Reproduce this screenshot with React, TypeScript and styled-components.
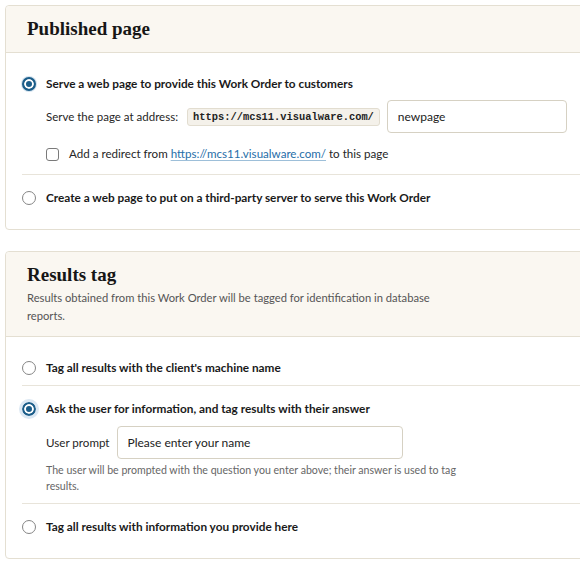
import styled, { createGlobalStyle } from 'styled-components'

const GlobalStyle = createGlobalStyle`
  html, body {
    margin: 0;
    padding: 0;
    background: #ffffff;
    overflow: hidden;
  }
  body {
    font-family: Lato, "Noto Sans", sans-serif;
    color: #222;
  }
`

const Page = styled.div`
  padding: 5px 0 0 5px;
  width: 640px;
`

const Card = styled.section`
  border: 1px solid #e4dfd2;
  border-radius: 4px;
  background: #fff;
  margin-bottom: 21px;
`

const CardHeader = styled.header`
  background: #faf7f1;
  border-bottom: 1px solid #e4dfd2;
  border-radius: 4px 4px 0 0;
  padding: 11px 21px 11px;
`

const Title = styled.h2`
  margin: 0;
  font-family: "Liberation Serif", serif;
  font-weight: 700;
  font-size: 19px;
  line-height: 24px;
  color: #161616;
`

const Description = styled.p`
  margin: 2px 0 0;
  max-width: 430px;
  font-size: 11.2px;
  line-height: 18px;
  color: #555;
`

const CardBody = styled.div`
  padding: 8px 0 14px 16px;
`

const Option = styled.div`
  padding: 13px 0 7px;
  & + & {
    border-top: 1px solid #e8e4da;
  }
`

const OptionLabel = styled.label`
  display: flex;
  align-items: center;
  gap: 10px;
  font-size: 11.8px;
  font-weight: 700;
  line-height: 20px;
  color: #1a1a1a;
`

const Radio = styled.span<{ $checked?: boolean; $focused?: boolean }>`
  flex: none;
  width: 14px;
  height: 14px;
  box-sizing: border-box;
  border-radius: 50%;
  border: ${p => (p.$checked ? '2px solid #1b5d89' : '1px solid #858585')};
  background: ${p => (p.$checked ? '#1b5d89' : '#fff')};
  box-shadow: ${p =>
    p.$checked
      ? 'inset 0 0 0 2px #fff, 0 0 0 1px #d3e2ee'
      : 'none'};
  outline: ${p => (p.$focused ? '3px solid #dce8f3' : 'none')};
  outline-offset: 0;
`

const SubContent = styled.div`
  padding-left: 24px;
`

const AddressRow = styled.div`
  display: flex;
  align-items: center;
  margin-top: 6px;
  font-size: 11.5px;
  color: #262626;
`

const AddressLabel = styled.span`
  margin-right: 9px;
`

const Code = styled.code`
  font-family: "Liberation Mono", monospace;
  font-weight: 700;
  font-size: 10.4px;
  color: #222;
  background: #f4f1ea;
  border: 1px solid #e2ddd0;
  border-radius: 3px;
  padding: 2px 5px;
  margin-right: 7px;
`

const TextInput = styled.input<{ $width: number }>`
  box-sizing: border-box;
  width: ${p => p.$width}px;
  height: 33px;
  border: 1px solid #d6d1c3;
  border-radius: 4px;
  padding: 0 10px;
  font-family: Lato, "Noto Sans", sans-serif;
  font-size: 12px;
  color: #222;
  background: #fff;
  outline: none;
`

const CheckRow = styled.label`
  display: flex;
  align-items: center;
  gap: 10px;
  margin-top: 12px;
  margin-bottom: 4px;
  font-size: 11.6px;
  line-height: 18px;
  color: #262626;
`

const Checkbox = styled.span`
  flex: none;
  width: 13px;
  height: 13px;
  box-sizing: border-box;
  border: 1px solid #7a7a7a;
  border-radius: 3px;
  background: #fff;
`

const Link = styled.a`
  color: #1f6ea8;
  text-decoration: underline;
  text-decoration-color: #9dbfd9;
  text-underline-offset: 2px;
`

const PromptRow = styled.div`
  display: flex;
  align-items: center;
  gap: 7px;
  margin-top: 7px;
  font-size: 11.6px;
  color: #262626;
`

const Help = styled.p`
  margin: 3px 0 2px;
  max-width: 425px;
  font-size: 10.6px;
  line-height: 16px;
  color: #666;
`

export default function App() {
  return (
    <>
      <GlobalStyle />
      <Page>
        <Card>
          <CardHeader>
            <Title>Published page</Title>
          </CardHeader>
          <CardBody>
            <Option>
              <OptionLabel>
                <Radio $checked />
                Serve a web page to provide this Work Order to customers
              </OptionLabel>
              <SubContent>
                <AddressRow>
                  <AddressLabel>Serve the page at address:</AddressLabel>
                  <Code>https://mcs11.visualware.com/</Code>
                  <TextInput $width={180} defaultValue="newpage" />
                </AddressRow>
                <CheckRow>
                  <Checkbox />
                  <span>
                    Add a redirect from <Link href="#">https://mcs11.visualware.com/</Link> to this page
                  </span>
                </CheckRow>
              </SubContent>
            </Option>
            <Option>
              <OptionLabel>
                <Radio />
                Create a web page to put on a third-party server to serve this Work Order
              </OptionLabel>
            </Option>
          </CardBody>
        </Card>

        <Card>
          <CardHeader>
            <Title>Results tag</Title>
            <Description>
              Results obtained from this Work Order will be tagged for identification in database
              reports.
            </Description>
          </CardHeader>
          <CardBody>
            <Option>
              <OptionLabel>
                <Radio />
                Tag all results with the client's machine name
              </OptionLabel>
            </Option>
            <Option>
              <OptionLabel>
                <Radio $checked $focused />
                Ask the user for information, and tag results with their answer
              </OptionLabel>
              <SubContent>
                <PromptRow>
                  User prompt
                  <TextInput $width={286} defaultValue="Please enter your name" />
                </PromptRow>
                <Help>
                  The user will be prompted with the question you enter above; their answer is used
                  to tag results.
                </Help>
              </SubContent>
            </Option>
            <Option>
              <OptionLabel>
                <Radio />
                Tag all results with information you provide here
              </OptionLabel>
            </Option>
          </CardBody>
        </Card>
      </Page>
    </>
  )
}
